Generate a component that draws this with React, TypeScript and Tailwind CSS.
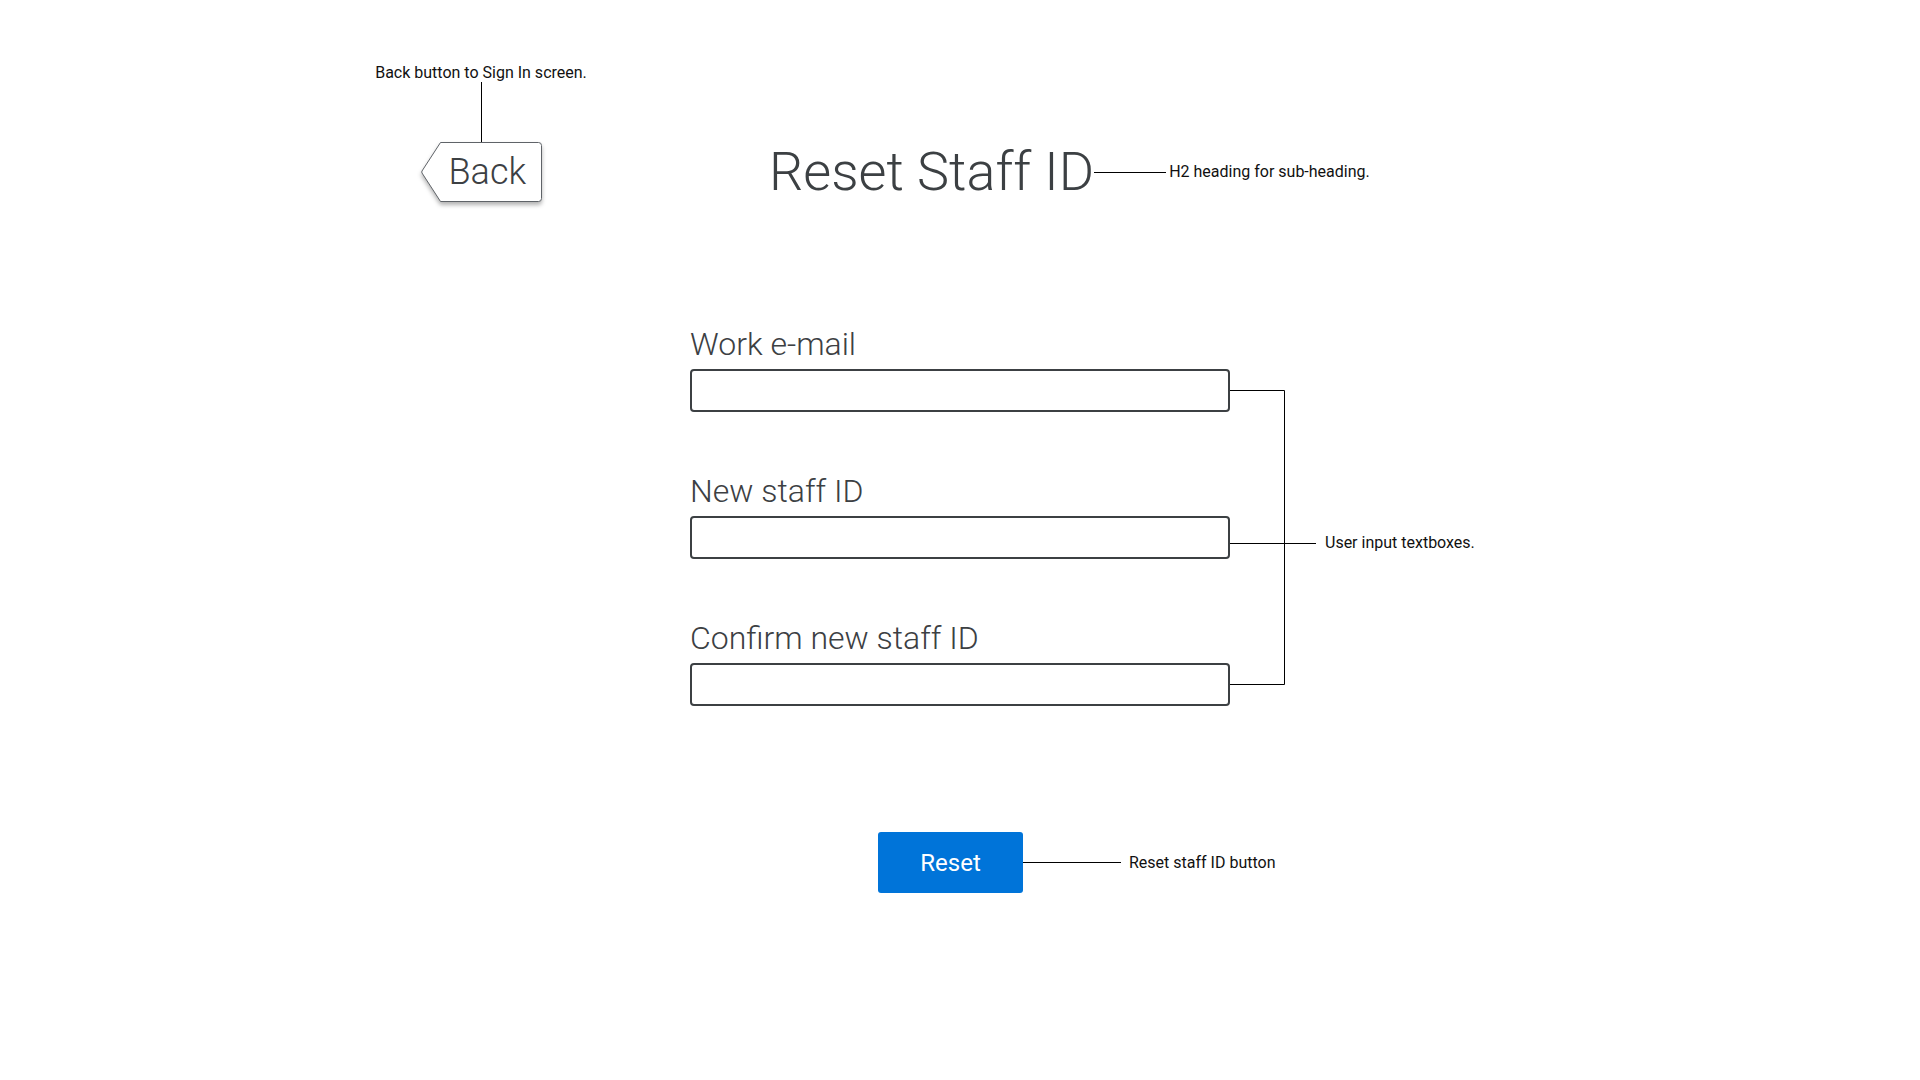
import React from "react";

const note = "text-[16px] leading-[18px] text-[#111] whitespace-nowrap";

function Field({ label }: { label: string }) {
  return (
    <div className="flex flex-col">
      <label className="text-[32px] leading-[32px] font-light text-[#3c4043] whitespace-nowrap">{label}</label>
      <input
        type="text"
        className="mt-[9px] h-[43px] w-[540px] rounded-[4px] border-2 border-[#3c4043] bg-white outline-none"
      />
    </div>
  );
}

function BackButton() {
  return (
    <button className="relative flex h-[60px] w-[121px] items-center pl-[28px]">
      <svg
        aria-hidden
        className="absolute left-0 top-0 drop-shadow-[0_3px_2px_rgba(0,0,0,0.3)]"
        width="122"
        height="61"
        viewBox="0 0 122 61"
      >
        <path
          d="M19.5 0.5 L117.5 0.5 Q120.5 0.5 120.5 3.5 L120.5 56.5 Q120.5 59.5 117.5 59.5 L19.5 59.5 L1 31 Q0.5 30 1 29 Z"
          fill="#fff"
          stroke="#5f6368"
          strokeWidth="1"
        />
      </svg>
      <span className="relative text-[36px] leading-none font-light text-[#3c4043]">Back</span>
    </button>
  );
}

export default function App() {
  return (
    <div className="min-h-screen w-full bg-white pt-[64px] font-['Roboto',sans-serif]">
      {/* header: back button + page heading */}
      <div className="flex items-end">
        <div className="ml-[375px] flex w-[212px] flex-col items-center">
          <p className={note}>Back button to Sign In screen.</p>
          <div className="h-[60px] w-px bg-black" />
          <BackButton />
        </div>
        <div className="ml-[182px] flex h-[60px] items-center">
          <h2 className="text-[54px] leading-none font-light text-[#3c4043] whitespace-nowrap">Reset Staff ID</h2>
          <div className="h-px w-[72px] bg-black" />
          <p className={`ml-[3px] ${note}`}>H2 heading for sub-heading.</p>
        </div>
      </div>

      {/* form fields */}
      <div className="ml-[690px] mt-[126px] flex">
        <div className="flex w-[540px] flex-col gap-[63px]">
          <Field label="Work e-mail" />
          <Field label="New staff ID" />
          <Field label="Confirm new staff ID" />
        </div>
        <svg aria-hidden width="86" height="370" viewBox="0 0 86 370" className="shrink-0">
          <g stroke="#000" strokeWidth="1" fill="none">
            <path d="M0 62.5 H54.5 V356.5 H0" />
            <path d="M0 215.5 H86" />
          </g>
        </svg>
        <p className={`ml-[9px] pt-[206px] ${note}`}>User input textboxes.</p>
      </div>

      {/* submit */}
      <div className="ml-[878px] mt-[126px] flex items-center">
        <button className="h-[61px] w-[145px] rounded-[3px] bg-[#0074d9] text-[24px] text-white">Reset</button>
        <div className="h-px w-[98px] bg-black" />
        <p className={`ml-[8px] ${note}`}>Reset staff ID button</p>
      </div>
    </div>
  );
}
